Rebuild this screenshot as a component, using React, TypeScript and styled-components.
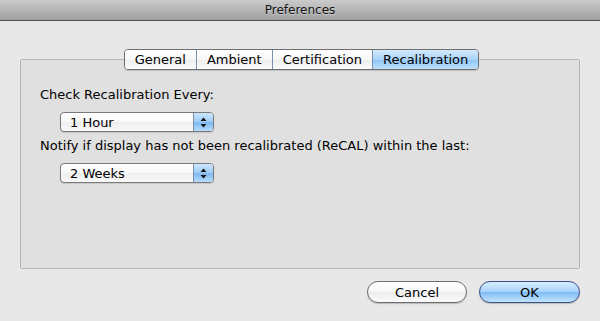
import React from 'react';
import styled, { createGlobalStyle } from 'styled-components';

const GlobalStyle = createGlobalStyle`
    html, body {
        margin: 0;
        padding: 0;
        background: #e8e8e8;
    }
    * {
        box-sizing: border-box;
    }
`;

const Window = styled.div`
    width: 600px;
    height: 321px;
    display: flex;
    flex-direction: column;
    background: #e8e8e8;
    font-family: 'DejaVu Sans', 'Liberation Sans', sans-serif;
    font-size: 13px;
    color: #000;
    overflow: hidden;
`;

const TitleBar = styled.div`
    height: 21px;
    display: flex;
    align-items: center;
    justify-content: center;
    background: linear-gradient(#cbcbcb, #a0a0a0);
    border-bottom: 1px solid #4f4f4f;
    font-size: 12px;
    color: #111;
    text-shadow: 0 1px 0 rgba(255, 255, 255, 0.4);
`;

const Body = styled.div`
    flex: 1;
    display: flex;
    flex-direction: column;
    padding: 38px 20px 0 20px;
`;

const Panel = styled.div`
    height: 210px;
    background: #e0e0e0;
    border: 1px solid #b4b4b4;
    border-radius: 2px;
    display: flex;
    flex-direction: column;
`;

const TabStrip = styled.div`
    display: flex;
    justify-content: center;
    margin-top: -11px;
    padding-left: 3px;
`;

const Tabs = styled.div`
    display: flex;
    height: 21px;
    border: 1px solid #6e6e6e;
    border-radius: 4px;
    overflow: hidden;
    box-shadow: 0 1px 1px rgba(0, 0, 0, 0.15);
`;

const Tab = styled.div<{ $active?: boolean }>`
    display: flex;
    align-items: center;
    padding: 0 10px;
    line-height: 1;
    background: ${(p) =>
        p.$active
            ? 'linear-gradient(#d3ebfd 0%, #a9d3f8 50%, #8cc4f6 51%, #bfe1fc 100%)'
            : 'linear-gradient(#ffffff 0%, #f7f7f7 50%, #ededed 51%, #fafafa 100%)'};
    & + & {
        border-left: 1px solid ${(p) => (p.$active ? '#7b8fb0' : '#b9b9b9')};
    }
`;

const Content = styled.div`
    display: flex;
    flex-direction: column;
    align-items: flex-start;
    padding: 17px 0 0 19px;
`;

const Label = styled.div<{ $gap?: number }>`
    line-height: 16px;
    margin-top: ${(p) => p.$gap ?? 0}px;
`;

const Popup = styled.div`
    margin: 9px 0 0 20px;
    width: 154px;
    height: 20px;
    display: flex;
    border: 1px solid #7a7a7a;
    border-radius: 4px;
    overflow: hidden;
    background: linear-gradient(#ffffff 0%, #f8f8f8 50%, #eeeeee 51%, #f9f9f9 100%);
    box-shadow: 0 1px 1px rgba(0, 0, 0, 0.12);
`;

const PopupText = styled.div`
    flex: 1;
    display: flex;
    align-items: center;
    padding-left: 9px;
`;

const PopupArrows = styled.div`
    width: 20px;
    display: flex;
    align-items: center;
    justify-content: center;
    border-left: 1px solid #7d8fae;
    background: linear-gradient(#cde7fd 0%, #9ccbf6 50%, #7db8f2 51%, #b6dcfc 100%);
`;

const Footer = styled.div`
    display: flex;
    justify-content: flex-end;
    gap: 12px;
    margin-top: 12px;
`;

const Button = styled.div<{ $primary?: boolean }>`
    width: ${(p) => (p.$primary ? 101 : 100)}px;
    height: 22px;
    display: flex;
    align-items: center;
    justify-content: center;
    border-radius: 11px;
    border: 1px solid ${(p) => (p.$primary ? '#3b4f8a' : '#6d6d6d')};
    background: ${(p) =>
        p.$primary
            ? 'linear-gradient(#d6ecfe 0%, #a6d2fa 50%, #7fbcf4 51%, #c2e4fe 100%)'
            : 'linear-gradient(#ffffff 0%, #f8f8f8 50%, #ececec 51%, #fbfbfb 100%)'};
    box-shadow: 0 1px 1px rgba(0, 0, 0, 0.2);
`;

function Arrows() {
    return (
        <svg width="7" height="11" viewBox="0 0 7 11">
            <path d="M3.5 0.5 L6.5 4 L0.5 4 Z" fill="#111" />
            <path d="M0.5 7 L6.5 7 L3.5 10.5 Z" fill="#111" />
        </svg>
    );
}

function PopupButton({ value }: { value: string }) {
    return (
        <Popup>
            <PopupText>{value}</PopupText>
            <PopupArrows>
                <Arrows />
            </PopupArrows>
        </Popup>
    );
}

export default function App() {
    return (
        <Window>
            <GlobalStyle />
            <TitleBar>Preferences</TitleBar>
            <Body>
                <Panel>
                    <TabStrip>
                        <Tabs>
                            <Tab>General</Tab>
                            <Tab>Ambient</Tab>
                            <Tab>Certification</Tab>
                            <Tab $active>Recalibration</Tab>
                        </Tabs>
                    </TabStrip>
                    <Content>
                        <Label>Check Recalibration Every:</Label>
                        <PopupButton value="1 Hour" />
                        <Label $gap={6}>
                            Notify if display has not been recalibrated (ReCAL) within the last:
                        </Label>
                        <PopupButton value="2 Weeks" />
                    </Content>
                </Panel>
                <Footer>
                    <Button>Cancel</Button>
                    <Button $primary>OK</Button>
                </Footer>
            </Body>
        </Window>
    );
}
